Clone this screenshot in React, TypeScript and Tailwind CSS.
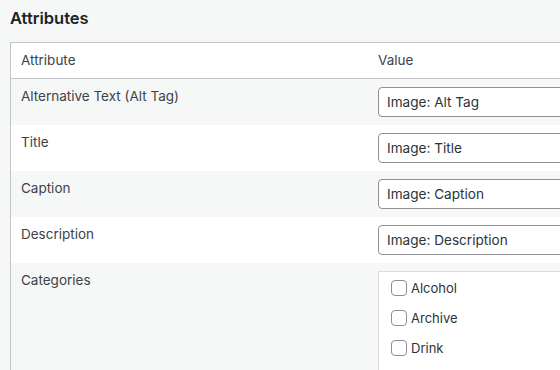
const rows = [
  { label: 'Alternative Text (Alt Tag)', value: 'Image: Alt Tag' },
  { label: 'Title', value: 'Image: Title' },
  { label: 'Caption', value: 'Image: Caption' },
  { label: 'Description', value: 'Image: Description' },
];

const categories = ['Alcohol', 'Archive', 'Drink'];

export default function App() {
  return (
    <div
      className="w-[560px] h-[370px] overflow-hidden bg-[#f6f7f7] text-[#3c434a]"
      style={{ fontFamily: 'Inter, "Noto Sans", sans-serif' }}
    >
      <h2 className="pl-[10px] pt-[7px] h-[42px] text-[16.5px] font-semibold text-[#1d2327] leading-[22px]">
        Attributes
      </h2>
      <div className="ml-[10px] w-[640px] border border-[#c3c4c7] bg-white">
        <div className="grid grid-cols-[357px_1fr] border-b border-[#c3c4c7] text-[13.5px] leading-[19px]">
          <div className="px-[10px] py-[8px]">Attribute</div>
          <div className="px-[10px] py-[8px]">Value</div>
        </div>
        {rows.map((r, i) => (
          <div
            key={r.label}
            className={`grid grid-cols-[357px_1fr] ${i % 2 === 0 ? 'bg-[#f6f7f7]' : 'bg-white'}`}
          >
            <div className="px-[10px] py-[8px] text-[13.5px] leading-[19px]">{r.label}</div>
            <div className="px-[10px] py-[8px]">
              <div className="h-[30px] w-[260px] rounded-[4px] border border-[#8c8f94] bg-white px-[8px] flex items-center text-[13.6px] text-[#2c3338]">
                {r.value}
              </div>
            </div>
          </div>
        ))}
        <div className="grid grid-cols-[357px_1fr] bg-[#f6f7f7]">
          <div className="px-[10px] py-[8px] text-[13.5px] leading-[19px]">Categories</div>
          <div className="px-[10px] pt-[8px]">
            <div className="w-[260px] h-[120px] border border-[#dcdcde] bg-white pl-[12px] pt-[8px] flex flex-col gap-[14px]">
              {categories.map((c) => (
                <label key={c} className="flex items-center gap-[4px] text-[13px] leading-[16px] text-[#2c3338]">
                  <span className="w-[16px] h-[16px] rounded-[4px] border border-[#8c8f94] bg-white" />
                  {c}
                </label>
              ))}
            </div>
          </div>
        </div>
      </div>
    </div>
  );
}
